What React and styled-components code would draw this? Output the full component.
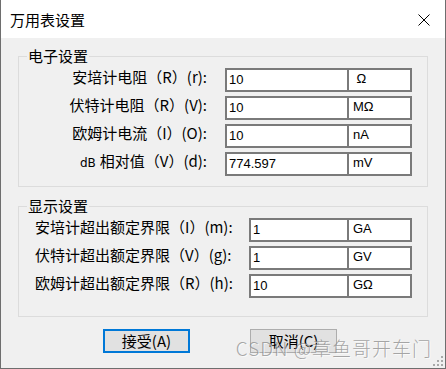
import React from "react";
import styled, { createGlobalStyle } from "styled-components";

const GlobalStyle = createGlobalStyle`
  html, body { margin: 0; padding: 0; background: #ffffff; }
  body { font-family: "Noto Sans CJK SC", "Noto Sans", sans-serif; }
  * { box-sizing: border-box; }
`;

const Window = styled.div`
  position: relative;
  width: 446px;
  height: 369px;
  border: 1px solid #6e6e6e;
  border-top: none;
  background: #f0f0f0;
  display: flex;
  flex-direction: column;
  overflow: hidden;
`;

const TitleBar = styled.div`
  height: 38px;
  flex: none;
  background: #ffffff;
  display: flex;
  align-items: center;
  justify-content: space-between;
  padding: 0 15px 0 9px;
`;

const Title = styled.span`
  font-size: 15px;
  line-height: 20px;
  color: #000;
  margin-top: 1px;
`;

const CloseIcon = styled.svg`
  display: block;
  width: 12px;
  height: 12px;
  margin-top: 1px;
`;

const Body = styled.div`
  flex: 1;
  display: flex;
  flex-direction: column;
  padding: 9px 17px 0 17px;
`;

const Group = styled.fieldset`
  margin: ${(p) => (p.$first ? "0" : "10px 0 0 0")};
  padding: 3px 0 ${(p) => p.$bottom}px 0;
  border: 1px solid #dcdcdc;
  min-width: 0;
  display: flex;
  flex-direction: column;
  gap: 4px;
`;

const Legend = styled.legend`
  margin-left: 8px;
  padding: 0 1px;
  font-size: 15px;
  line-height: 18px;
  color: #000;
`;

const Row = styled.div`
  display: flex;
  align-items: flex-start;
  height: 24px;
  padding-left: ${(p) => p.$indent || 0}px;
`;

const Label = styled.div`
  width: ${(p) => p.$width}px;
  text-align: ${(p) => p.$align};
  font-size: 15px;
  line-height: 17px;
  color: #000;
  white-space: nowrap;
  flex: none;
`;

const Small = styled.span`
  font-family: "DejaVu Sans", "Liberation Sans", sans-serif;
  font-size: 12px;
  margin-right: 4px;
`;

const InputPair = styled.div`
  display: flex;
  width: ${(p) => p.$width}px;
  height: 24px;
  margin-left: 18px;
  border: 2px solid #7a7a7a;
  background: #ffffff;
  flex: none;
`;

const Value = styled.div`
  flex: 1;
  padding-left: 2px;
  font-family: "Liberation Sans", Arial, sans-serif;
  font-size: 13px;
  line-height: 20px;
  color: #000;
`;

const Unit = styled.div`
  width: 63px;
  flex: none;
  border-left: 2px solid #7a7a7a;
  padding-left: 4px;
  font-family: "Liberation Sans", Arial, sans-serif;
  font-size: 13px;
  line-height: 18px;
  color: #000;
  white-space: pre;
`;

const ButtonBar = styled.div`
  display: flex;
  gap: 60px;
  margin-top: 12px;
  padding-left: 85px;
`;

const Button = styled.button`
  width: 87px;
  height: 24px;
  padding: 0;
  background: #e1e1e1;
  border: ${(p) => (p.$primary ? "2px solid #0078d7" : "1px solid #adadad")};
  font-family: "Noto Sans CJK SC", "Noto Sans", sans-serif;
  font-size: 15px;
  line-height: 18px;
  color: #000;
  display: flex;
  align-items: center;
  justify-content: center;
`;

const Watermark = styled.div`
  position: absolute;
  right: 13px;
  top: 335px;
  font-family: "Noto Sans CJK SC", "Noto Sans", sans-serif;
  font-size: 19px;
  line-height: 26px;
  letter-spacing: 1px;
  font-weight: 300;
  color: rgba(140, 140, 140, 0.75);
  text-shadow: 1px 1px 0 rgba(255, 255, 255, 0.7);
  white-space: nowrap;
  pointer-events: none;
`;

const Grip = styled.svg`
  position: absolute;
  right: 2px;
  bottom: 2px;
  width: 10px;
  height: 10px;
`;

const elecRows = [
  { label: "安培计电阻（R）(r):", value: "10", unit: " Ω" },
  { label: "伏特计电阻（R）(V):", value: "10", unit: "MΩ" },
  { label: "欧姆计电流（I）(O):", value: "10", unit: "nA" },
  { label: "相对值（V）(d):", prefix: "dB", value: "774.597", unit: "mV" },
];

const dispRows = [
  { label: "安培计超出额定界限（I）(m):", value: "1", unit: "GA" },
  { label: "伏特计超出额定界限（V）(g):", value: "1", unit: "GV" },
  { label: "欧姆计超出额定界限（R）(h):", value: "10", unit: "GΩ" },
];

export default function App() {
  return (
    <>
      <GlobalStyle />
      <Window>
        <TitleBar>
          <Title>万用表设置</Title>
          <CloseIcon viewBox="0 0 12 12">
            <path d="M0.5 0.5 L11.5 11.5 M11.5 0.5 L0.5 11.5" stroke="#000" strokeWidth="1" fill="none" />
          </CloseIcon>
        </TitleBar>
        <Body>
          <Group $first $bottom={10}>
            <Legend>电子设置</Legend>
            {elecRows.map((r) => (
              <Row key={r.label}>
                <Label $width={188} $align="right">
                  {r.prefix && <Small>{r.prefix}</Small>}
                  {r.label}
                </Label>
                <InputPair $width={187}>
                  <Value>{r.value}</Value>
                  <Unit>{r.unit}</Unit>
                </InputPair>
              </Row>
            ))}
          </Group>
          <Group $bottom={18}>
            <Legend>显示设置</Legend>
            {dispRows.map((r) => (
              <Row key={r.label} $indent={16}>
                <Label $width={196} $align="left">
                  {r.label}
                </Label>
                <InputPair $width={163}>
                  <Value>{r.value}</Value>
                  <Unit>{r.unit}</Unit>
                </InputPair>
              </Row>
            ))}
          </Group>
          <ButtonBar>
            <Button $primary>接受(A)</Button>
            <Button>取消(C)</Button>
          </ButtonBar>
        </Body>
        <Watermark>CSDN @章鱼哥开车门</Watermark>
        <Grip viewBox="0 0 10 10">
          <g fill="#a8a8a8">
            <rect x="8" y="0" width="2" height="2" />
            <rect x="4" y="4" width="2" height="2" />
            <rect x="8" y="4" width="2" height="2" />
            <rect x="0" y="8" width="2" height="2" />
            <rect x="4" y="8" width="2" height="2" />
            <rect x="8" y="8" width="2" height="2" />
          </g>
        </Grip>
      </Window>
    </>
  );
}
